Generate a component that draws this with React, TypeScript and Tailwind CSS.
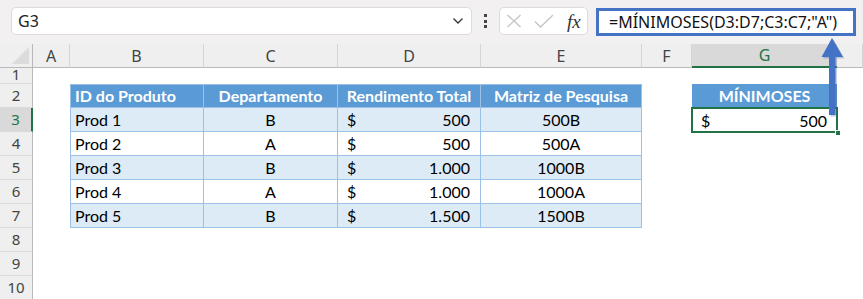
import React from "react"

const ui = { fontFamily: '"Noto Sans", "Open Sans", sans-serif' }
const cell = { fontFamily: 'Lato, "Liberation Sans", sans-serif' }

const letters = ["A", "B", "C", "D", "E", "F", "G", ""]

const rows = [
  ["Prod 1", "B", "500", "500B"],
  ["Prod 2", "A", "500", "500A"],
  ["Prod 3", "B", "1.000", "1000B"],
  ["Prod 4", "A", "1.000", "1000A"],
  ["Prod 5", "B", "1.500", "1500B"],
]

function RowHead({ n, tall = true }: { n: number; tall?: boolean }) {
  const active = n === 3
  return (
    <div
      style={ui}
      className={
        "flex justify-center border-b border-[#dadada] text-[15px] " +
        (tall ? "items-center " : "items-end pb-[1px] leading-[16px] ") +
        (active
          ? "bg-[#d9d9d9] text-[#217346] border-r-2 border-r-[#217346]"
          : "bg-[#efefef] text-[#444] border-r border-r-[#b9b9b9]")
      }
    >
      {n}
    </div>
  )
}

function Empty({ n }: { n: number }) {
  return <div className="bg-white" />
}

export default function App() {
  return (
    <div className="relative w-[863px] h-[299px] overflow-hidden bg-white">
      {/* formula bar */}
      <div className="h-[44px] bg-[#f3f0f2] flex items-start pt-[7px] pl-[11px]" style={ui}>
        <div className="w-[461px] h-[28px] bg-white rounded-[5px] border border-[#dedbdd] flex items-center justify-between pl-[6px] pr-[7px] text-[16px] text-[#222]">
          <span>G3</span>
          <svg width="12" height="8" viewBox="0 0 12 8">
            <path d="M1.5 1.5 L6 6 L10.5 1.5" stroke="#333" strokeWidth="1.3" fill="none" />
          </svg>
        </div>
        <div className="w-[27px] h-[28px] flex flex-col items-center justify-center gap-[2.5px]">
          <div className="w-[3px] h-[3px] bg-[#444]" />
          <div className="w-[3px] h-[3px] bg-[#444]" />
          <div className="w-[3px] h-[3px] bg-[#444]" />
        </div>
        <div className="w-[89px] h-[28px] bg-white rounded-[5px] border border-[#dedbdd] flex items-center pl-[6px]">
          <svg width="16" height="14" viewBox="0 0 16 14">
            <path d="M1.5 1 L14.5 13 M14.5 1 L1.5 13" stroke="#c4c4c4" strokeWidth="1.3" fill="none" />
          </svg>
          <svg className="ml-[12px]" width="20" height="14" viewBox="0 0 20 14">
            <path d="M1 7.5 L6.5 13 L19 1" stroke="#c4c4c4" strokeWidth="1.3" fill="none" />
          </svg>
          <span
            className="ml-[13px] text-[19px] italic leading-none text-[#333]"
            style={{ fontFamily: '"Liberation Serif", serif' }}
          >
            fx
          </span>
        </div>
        <div className="ml-[8px] w-[260px] h-[28px] mt-[1px] border-[3px] border-[#4472c4] bg-white flex items-center pl-[10px] text-[16px] text-[#111]">
          =MÍNIMOSES(D3:D7;C3:C7;"A")
        </div>
      </div>

      {/* sheet */}
      <div className="grid grid-cols-[33px_37px_134px_134px_143px_161px_50px_145px_1fr] grid-rows-[24px_16px_repeat(9,24px)]">
        {/* column headers */}
        <div className="bg-[#efefef] border-r border-b border-[#b9b9b9] flex items-end justify-end p-[3px]">
          <div className="w-0 h-0 border-l-[17px] border-l-transparent border-b-[17px] border-b-[#dcdcdc]" />
        </div>
        {letters.map((l, i) =>
          l === "G" ? (
            <div
              key={i}
              style={ui}
              className="bg-[#d9d9d9] border-b-2 border-[#217346] flex items-center justify-center text-[16px] text-[#217346]"
            >
              {l}
            </div>
          ) : (
            <div
              key={i}
              style={ui}
              className="bg-[#efefef] border-r border-r-[#d5d5d5] border-b border-b-[#b9b9b9] flex items-center justify-center text-[16px] text-[#444]"
            >
              {l}
            </div>
          )
        )}

        {/* row 1 */}
        <RowHead n={1} tall={false} />
        {letters.map((_, i) => (
          <Empty key={i} n={i} />
        ))}

        {/* row 2: headers */}
        <RowHead n={2} />
        <div />
        {["ID do Produto", "Departamento", "Rendimento Total", "Matriz de Pesquisa"].map((h, i) => (
          <div
            key={h}
            style={cell}
            className={
              "bg-[#5b9bd5] text-white font-bold text-[16px] flex items-center border-t border-r border-b border-[#9bc2e6] " +
              (i === 0 ? "border-l pl-[4px]" : "justify-center")
            }
          >
            {h}
          </div>
        ))}
        <div />
        <div
          style={cell}
          className="bg-[#5b9bd5] text-white font-bold text-[16px] flex items-center justify-center"
        >
          MÍNIMOSES
        </div>
        <div />

        {/* rows 3..7 */}
        {rows.map((r, idx) => {
          const bg = idx % 2 === 0 ? "bg-[#ddebf7]" : "bg-white"
          const base = bg + " border-r border-b border-[#9bc2e6] flex items-center text-[16px] text-black pt-[1px] "
          return (
            <React.Fragment key={idx}>
              <RowHead n={idx + 3} />
              <div />
              <div style={cell} className={base + "border-l pl-[4px]"}>
                {r[0]}
              </div>
              <div style={cell} className={base + "justify-center"}>
                {r[1]}
              </div>
              <div style={cell} className={base + "justify-between pl-[9px] pr-[10px]"}>
                <span>$</span>
                <span>{r[2]}</span>
              </div>
              <div style={cell} className={base + "justify-center"}>
                {r[3]}
              </div>
              <div />
              {idx === 0 ? (
                <div
                  style={cell}
                  className="relative flex items-center justify-between pl-[9px] pr-[10px] pt-[1px] text-[16px] text-black"
                >
                  <span>$</span>
                  <span>500</span>
                  <div className="absolute -left-[1px] -top-[1px] -right-[1px] -bottom-[1px] border-2 border-[#217346]" />
                  <div className="absolute -right-[4px] -bottom-[4px] w-[6px] h-[6px] bg-[#217346] border border-white" />
                </div>
              ) : (
                <div />
              )}
              <div />
            </React.Fragment>
          )
        })}

        {/* rows 8..10 */}
        {[8, 9, 10].map((n) => (
          <React.Fragment key={n}>
            <RowHead n={n} />
            {letters.map((_, i) => (
              <Empty key={i} n={i} />
            ))}
          </React.Fragment>
        ))}
      </div>

      {/* arrow pointing at the formula */}
      <svg className="absolute left-[818px] top-[36px]" width="30" height="84" viewBox="0 0 30 84">
        <path d="M14 2 L25 21 L17.5 21 L17.5 79 L11 79 L11 21 L3.5 21 Z" fill="#3a5f9e" opacity="0.3" transform="translate(1.5 1.5)" />
        <path d="M14 2 L25 21 L17.5 21 L17.5 79 L11 79 L11 21 L3.5 21 Z" fill="#4472c4" />
      </svg>
    </div>
  )
}
